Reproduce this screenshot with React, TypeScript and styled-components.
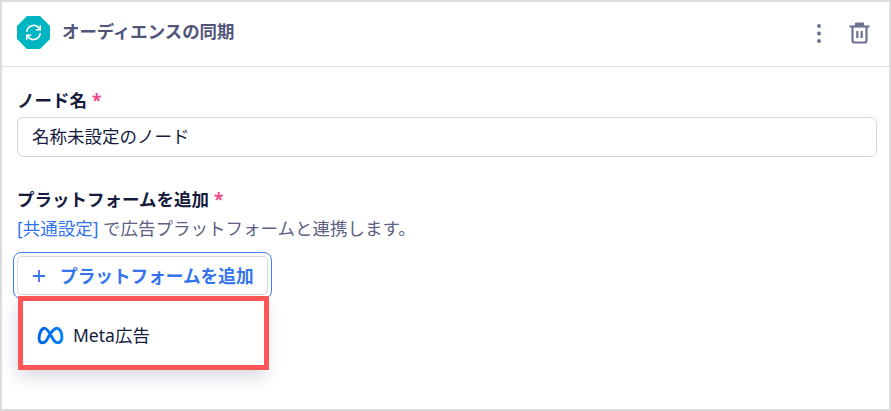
import styled, { createGlobalStyle } from 'styled-components';

const GlobalStyle = createGlobalStyle`
  html, body {
    margin: 0;
    padding: 0;
    background: #ffffff;
  }
  * {
    box-sizing: border-box;
  }
`;

const Panel = styled.div`
  width: 891px;
  height: 411px;
  border: 2px solid #dcdcdc;
  background: #ffffff;
  font-family: 'Noto Sans', 'Noto Sans CJK JP', sans-serif;
  font-size: 17.5px;
  color: #141b3d;
  overflow: hidden;
`;

const Header = styled.header`
  height: 65px;
  display: flex;
  align-items: center;
  padding: 0 19px 3px 15px;
  border-bottom: 1px solid #dcdbe8;
`;

const Badge = styled.div`
  width: 33px;
  height: 33px;
  background: #00b5c2;
  clip-path: polygon(30% 0, 70% 0, 100% 30%, 100% 70%, 70% 100%, 30% 100%, 0 70%, 0 30%);
  display: flex;
  align-items: center;
  justify-content: center;
  margin-right: 12px;
`;

const HeaderTitle = styled.h1`
  flex: 1;
  margin: 0 0 3px;
  font-size: 17.4px;
  line-height: 24px;
  font-weight: 700;
  color: #51557a;
`;

const IconButton = styled.button<{ $gap: number }>`
  border: 0;
  padding: 0;
  background: none;
  display: flex;
  margin-left: ${(p) => p.$gap}px;
`;

const Body = styled.div`
  padding: 21px 12px 0 15px;
`;

const Label = styled.label`
  display: block;
  font-size: 17.5px;
  line-height: 24px;
  font-weight: 700;
  color: #141b3d;
`;

const Star = styled.span`
  color: #ee4b8b;
  margin-left: 5px;
`;

const NameInput = styled.div`
  height: 40px;
  margin-top: 5px;
  padding: 0 14px 3px;
  display: flex;
  align-items: center;
  border: 1px solid #d5d6e2;
  border-radius: 6px;
  color: #141b3d;
`;

const PlatformSection = styled.section`
  margin-top: 30px;
`;

const Help = styled.p`
  margin: 6px 0 0;
  font-size: 17.5px;
  line-height: 22px;
  color: #5c6185;
`;

const HelpLink = styled.a`
  color: #3273f0;
`;

const MenuAnchor = styled.div`
  position: relative;
  width: 259px;
  margin: 13px 0 0 -4px;
`;

const FocusRing = styled.div`
  padding: 3px;
  border: 1px solid #3f7ff7;
  border-radius: 8px;
`;

const AddButton = styled.button`
  width: 100%;
  height: 39px;
  display: flex;
  align-items: center;
  padding: 0 0 0 14px;
  gap: 14px;
  background: #ffffff;
  border: 1px solid #d8d9e3;
  border-radius: 5px;
  font-family: inherit;
  font-size: 17.65px;
  font-weight: 700;
  color: #3575ee;
`;

const Menu = styled.div`
  position: absolute;
  left: 5px;
  top: 46px;
  width: 247px;
  height: 72px;
  background: #ffffff;
  border-radius: 4px;
  box-shadow: 0 6px 18px rgba(40, 50, 90, 0.2);
  display: flex;
  align-items: center;
  padding: 0 0 0 19px;
  gap: 9px;
  color: #141b3d;
`;

const MetaMark = styled.svg`
  margin-top: 2px;
`;

// red annotation drawn over the screenshot
const Highlight = styled.div`
  position: absolute;
  left: 5px;
  top: 44px;
  width: 251px;
  height: 74px;
  border: 5px solid #ff5555;
`;

export default function App() {
  return (
    <Panel>
      <GlobalStyle />
      <Header>
        <Badge>
          <svg width="19" height="19" viewBox="0 0 24 24" fill="none" stroke="#fff" strokeWidth="2" strokeLinecap="round" strokeLinejoin="round">
            <path d="M3.500 10.500A8.700 8.700 0 0 1 19 6.500l1.500 2" />
            <path d="M20.500 3.500v5h-5" />
            <path d="M20.500 13.500A8.700 8.700 0 0 1 5 17.500l-1.500-2" />
            <path d="M3.500 20.500v-5h5" />
          </svg>
        </Badge>
        <HeaderTitle>オーディエンスの同期</HeaderTitle>
        <IconButton $gap={0}>
          <svg width="6" height="20" viewBox="0 0 6 20" fill="#6d7293">
            <circle cx="3" cy="3" r="2" />
            <circle cx="3" cy="10.500" r="2" />
            <circle cx="3" cy="18" r="2" />
          </svg>
        </IconButton>
        <IconButton $gap={27}>
          <svg width="21" height="22" viewBox="0 0 21 22" fill="none" stroke="#6d7293" strokeWidth="2.200" strokeLinejoin="round">
            <path d="M0.500 4.500h20" />
            <path d="M7 4V1.500h7V4" fill="#6d7293" />
            <path d="M3.500 5v13.500a2 2 0 0 0 2 2h10a2 2 0 0 0 2-2V5" />
            <path d="M8.300 9v7M12.700 9v7" />
          </svg>
        </IconButton>
      </Header>
      <Body>
        <Label>
          ノード名<Star>*</Star>
        </Label>
        <NameInput>名称未設定のノード</NameInput>
        <PlatformSection>
          <Label>
            プラットフォームを追加<Star>*</Star>
          </Label>
          <Help>
            <HelpLink>[共通設定]</HelpLink> で広告プラットフォームと連携します。
          </Help>
          <MenuAnchor>
            <FocusRing>
              <AddButton>
                <svg width="14" height="14" viewBox="0 0 15 15" stroke="#3575ee" strokeWidth="1.900">
                  <path d="M7.500 1v13M1 7.500h13" />
                </svg>
                プラットフォームを追加
              </AddButton>
            </FocusRing>
            <Menu>
              <MetaMark width="27" height="19" viewBox="0 0 26 18" fill="none">
                <defs>
                  <linearGradient id="metaGrad" x1="0" y1="0" x2="1" y2="0">
                    <stop offset="0" stopColor="#0064e1" />
                    <stop offset="0.5" stopColor="#0073ee" />
                    <stop offset="1" stopColor="#0082fb" />
                  </linearGradient>
                </defs>
                <path
                  d="M2 12C2 6.500 4.500 2 7.200 2c3 0 6.300 6.800 8.300 10.500 1.400 2.600 2.600 3.500 4.200 3.500 2.800 0 4.300-2 4.300-5.500C24 5.500 21.800 2 19 2c-3.500 0-7.500 7.300-9.500 11C8.300 15 7.200 16 5.500 16 3.400 16 2 14.500 2 12z"
                  stroke="url(#metaGrad)"
                  strokeWidth="2.800"
                />
              </MetaMark>
              Meta広告
            </Menu>
            <Highlight />
          </MenuAnchor>
        </PlatformSection>
      </Body>
    </Panel>
  );
}
